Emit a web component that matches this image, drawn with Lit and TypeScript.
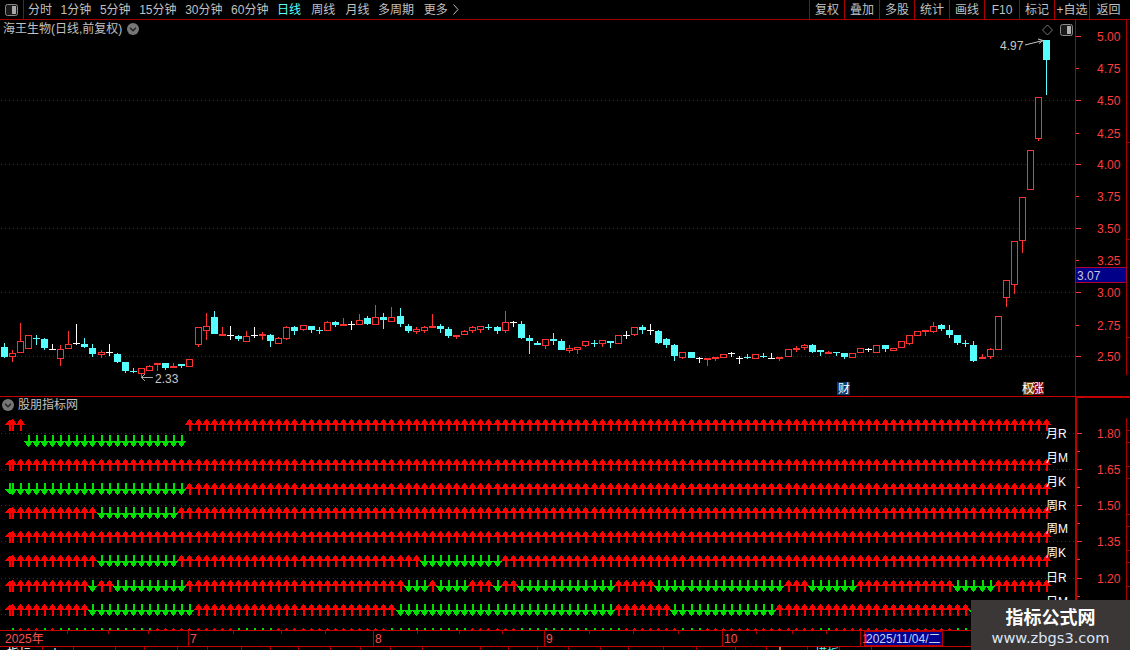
import { LitElement, html, css, svg } from "lit";
import { customElement } from "lit/decorators.js";

const RED = "#ff3232";
const DOT = "#a80000";
const CYAN = "#55ffff";
const WHITE = "#ffffff";

// kind: r hollow red, c filled cyan, d red doji bar, x cyan cross, w white cross
type C = [string, number, number, number, number];
const K: C[] = [
  ["c",343,347,357,358],["r",350,353,357,362],["r",323,341,353,353],["r",335,335,349,349],["x",335,338,339,345],
  ["c",338,339,348,350],["w",344,349,350,350],["r",345,349,359,366],["r",331,344,349,349],["w",324,343,344,345],
  ["c",338,344,347,348],["c",344,348,354,357],["r",350,352,355,358],["w",344,352,353,356],["c",353,354,362,363],
  ["c",362,362,371,373],["x",368,371,372,373],["r",368,368,374,378],["r",365,366,371,371],["d",363,363,365,371],
  ["c",363,363,368,370],["d",363,366,368,368],["c",364,364,366,368],["r",359,359,367,367],["r",327,327,345,347],
  ["r",313,326,331,340],["c",311,317,334,334],["d",327,334,336,336],["w",326,335,336,340],["c",335,336,339,341],
  ["r",331,336,342,342],["w",327,335,336,338],["d",332,334,336,340],["c",334,335,341,347],["r",337,338,344,344],
  ["r",326,327,339,340],["c",326,327,331,335],["r",325,325,330,331],["c",326,326,330,333],["x",327,330,331,334],
  ["r",321,322,331,331],["c",321,322,325,327],["d",318,324,326,326],["w",321,324,325,330],["r",314,320,325,325],
  ["c",316,318,324,325],["r",305,317,325,325],["c",313,317,320,329],["r",307,317,322,322],["c",308,316,324,327],
  ["c",324,326,331,333],["r",327,329,332,334],["r",326,327,331,333],["d",314,326,328,328],["c",324,326,329,333],
  ["c",327,329,336,338],["d",335,335,337,339],["r",330,331,335,335],["r",326,327,331,333],["r",326,326,330,333],
  ["x",324,327,328,330],["c",326,327,331,334],["r",311,322,331,333],["w",321,322,323,327],["c",321,324,338,339],
  ["c",335,338,341,354],["c",341,343,345,345],["r",339,339,346,349],["c",333,339,341,345],["c",339,341,350,350],
  ["r",345,348,351,353],["r",347,347,350,354],["r",341,341,346,347],["x",340,343,344,347],["r",340,340,344,347],
  ["c",341,341,343,348],["r",335,335,344,344],["w",331,335,336,339],["r",327,327,335,336],["c",325,327,330,334],
  ["w",324,330,331,335],["c",330,331,343,344],["c",338,339,345,348],["c",344,345,356,361],["r",352,352,358,359],
  ["c",352,352,358,358],["w",357,358,359,363],["d",358,358,360,366],["d",357,357,359,361],["r",354,354,358,358],
  ["w",352,353,354,357],["w",356,358,359,364],["x",354,357,358,359],["r",354,354,359,359],["x",353,356,357,358],
  ["w",353,358,359,359],["d",357,357,359,361],["r",349,349,357,357],["d",346,348,350,352],["r",344,345,348,350],
  ["c",344,345,352,353],["c",350,350,352,356],["d",351,352,354,354],["x",352,352,353,356],["c",353,353,357,359],
  ["r",353,353,358,358],["r",348,348,353,353],["w",348,349,350,352],["r",345,345,353,353],["c",345,345,349,352],
  ["r",348,348,351,351],["r",341,341,348,348],["r",335,335,344,345],["r",331,331,336,336],["d",330,330,332,336],
  ["r",322,326,332,333],["c",324,325,329,331],["c",325,330,335,338],["c",335,335,343,345],["x",340,343,344,347],
  ["c",341,345,361,362],["d",354,357,359,359],["r",348,349,357,359],["r",316,316,350,350],["r",280,280,298,307],
  ["r",241,241,285,294],["r",197,197,241,253],["r",150,150,190,190],["r",97,97,139,141],["c",40,40,60,95],
];

const cx = (i: number) => Math.floor(4.01 + 8.083 * i);

function candle(c: C, i: number) {
  const [k, wt, bt, bb, wb] = c;
  const m = cx(i);
  const l = m - 3;
  const col = k === "r" || k === "d" ? RED : k === "w" ? WHITE : CYAN;
  const wick = svg`<rect x=${m} y=${wt} width="1" height=${wb - wt} fill=${col}></rect>`;
  if (k === "r")
    return svg`${wick}<rect x=${l + 0.5} y=${bt + 0.5} width="6" height=${bb - bt - 1} fill="#000" stroke=${col}></rect>`;
  if (k === "x" || k === "w")
    return svg`${wick}<rect x=${l} y=${bt} width="7" height="1" fill=${col}></rect>`;
  return svg`${wick}<rect x=${l} y=${bt} width="7" height=${bb - bt} fill=${col}></rect>`;
}

function arrow(x: number, top: number, up: boolean) {
  const g = up ? "#ff0000" : "#00e000";
  return up
    ? svg`<path d="M${x} ${top}L${x + 5} ${top + 6}H${x + 1}V${top + 12}H${x - 1}V${top + 6}H${x - 5}Z" fill=${g}></path>`
    : svg`<path d="M${x - 1} ${top}H${x + 1}V${top + 6}H${x + 5}L${x} ${top + 12}L${x - 5} ${top + 6}H${x - 1}Z" fill=${g}></path>`;
}

// segments: [from, to, up?]
type Seg = [number, number, boolean];
const ROWS: { top: number; extra?: boolean; segs: Seg[] }[] = [
  { top: 419, extra: true, segs: [[1, 2, true], [23, 129, true]] },
  { top: 435, segs: [[3, 22, false]] },
  { top: 459, extra: true, segs: [[1, 129, true]] },
  { top: 483, extra: false, segs: [[1, 22, false], [23, 129, true]] },
  { top: 507, extra: true, segs: [[1, 11, true], [12, 21, false], [22, 129, true]] },
  { top: 531, extra: true, segs: [[1, 129, true]] },
  { top: 555, extra: true, segs: [[1, 11, true], [12, 21, false], [22, 51, true], [52, 61, false], [62, 129, true]] },
  { top: 580, extra: true, segs: [[1, 10, true], [11, 11, false], [12, 13, true], [14, 22, false], [23, 49, true], [50, 52, false], [53, 53, true], [54, 57, false], [58, 60, true], [61, 61, false], [62, 63, true], [64, 75, false], [76, 80, true], [81, 96, false], [97, 99, true], [100, 105, false], [106, 117, true], [118, 122, false], [123, 129, true]] },
  { top: 604, extra: true, segs: [[1, 10, true], [11, 23, false], [24, 48, true], [49, 75, false], [76, 82, true], [83, 95, false], [96, 119, true], [120, 120, false], [121, 129, true]] },
  { top: 628, segs: [[1, 1, false], [2, 4, true], [5, 5, false], [6, 6, true], [7, 18, false], [19, 28, true], [29, 33, false], [34, 47, true], [48, 57, false], [58, 63, true], [64, 76, false], [77, 83, true], [84, 86, false], [87, 100, true], [101, 102, false], [103, 117, true], [118, 119, false], [120, 129, true]] },
];

const arrows = () =>
  ROWS.map((r) => {
    const out: unknown[] = [];
    for (const [a, b, up] of r.segs)
      for (let i = a; i <= b; i++) out.push(arrow(cx(i) + 0.5, r.top, up));
    if (r.extra !== undefined) out.push(arrow(10, r.top, r.segs[0][2]));
    return out;
  });

const LABELS: [string, number][] = [
  ["月R", 438], ["月M", 462], ["月K", 486], ["周R", 510], ["周M", 533], ["周K", 557], ["日R", 582], ["日M", 606],
];
const UPPER: [string, number][] = [
  ["5.00", 36], ["4.75", 68], ["4.50", 100], ["4.25", 133], ["4.00", 164], ["3.75", 196], ["3.50", 228],
  ["3.25", 260], ["3.00", 292], ["2.75", 325], ["2.50", 356],
];
const LOWER: [string, number][] = [["1.80", 433], ["1.65", 469], ["1.50", 505], ["1.35", 541], ["1.20", 578]];
const TABS = ["分时", "1分钟", "5分钟", "15分钟", "30分钟", "60分钟", "日线", "周线", "月线", "多周期"];
const BTNS = ["复权", "叠加", "多股", "统计", "画线", "F10", "标记", "+自选", "返回"];
const MONTHS: [string, number][] = [["7", 188], ["8", 373], ["9", 544], ["10", 722], ["1", 860]];
const TTICKS = [67, 108, 148, 233, 281, 325, 417, 459, 502, 589, 633, 678, 756, 792, 826];
const STOPS = [42, 73, 115, 144, 177, 207, 241, 270, 298, 330, 360, 390, 422, 480, 508, 537, 568, 600, 628, 663, 696, 735, 766, 807, 839, 871, 971];
const STAT: Record<number, [string, string?]> = {
  0: ["指标"], 1: ["卜"], 23: ["大"], 24: ["模板", "cy"],
};

const split = (c: string) => svg`<svg class="ico" viewBox="0 0 13 12" width="13" height="12">
  <rect x="0.5" y="0.5" width="12" height="11" rx="2" fill="#1a1a1a" stroke="#8a8a8a"></rect>
  <rect x="7" y="2" width="4" height="8" fill=${c}></rect></svg>`;
const chev = () => html`<svg class="chev" viewBox="0 0 12 12" width="12" height="12">
  <circle cx="6" cy="6" r="6" fill="#777"></circle>
  <path d="M3 4.8L6 7.8L9 4.8" fill="none" stroke="#222" stroke-width="1.4"></path></svg>`;

@customElement("app-root")
export class AppRoot extends LitElement {
  static styles = css`
    :host { display: block; position: relative; width: 1130px; height: 650px; overflow: hidden; background: #000;
      font: 12px "Liberation Sans", "Noto Sans CJK SC", sans-serif; color: #c0c0c0; }
    svg { display: block; }
    svg text { font: 12px "Liberation Sans", "Noto Sans CJK SC", sans-serif; }
    .toolbar { display: flex; height: 19px; border-bottom: 1px solid #a80000; line-height: 21px; }
    .tool-icon { width: 23px; border-right: 1px solid #a80000; display: flex; align-items: center; justify-content: center; }
    .tabs { display: flex; gap: 8.6px; padding-left: 4px; flex: 1; white-space: nowrap; }
    .tabs .on { color: #55ffff; }
    .tabs .wide { margin-left: 1.6px; }
    .tabs .more { display: flex; align-items: flex-start; gap: 5px; margin-left: 1px; height: 19px; }
    .tabs .more svg { margin-top: 4px; }
    .btns { display: flex; }
    .btn { width: 34px; border-left: 1px solid #a80000; text-align: center; white-space: nowrap; }
    .btn.last { width: 37px; padding-right: 3px; }
    .pane { display: flex; position: relative; }
    .upper { height: 376px; border-bottom: 1px solid #c80000; }
    .lower { height: 233px; border-bottom: 1px solid #c80000; }
    .legend { position: absolute; display: flex; align-items: center; gap: 4px; line-height: 14px; white-space: nowrap; }
    .legend.top { left: 3px; top: 2px; gap: 5px; }
    .legend.bot { left: 2px; top: 1px; }
    .top-ico { position: absolute; left: 1060px; top: 4px; }
    .time { height: 15px; border-bottom: 1px solid #c80000; }
    .status { display: flex; height: 3px; overflow: hidden; line-height: 12px; }
    .cell { box-sizing: border-box; border-right: 1px solid #a80000; padding-top: 1px; padding-left: 7px; height: 20px; white-space: nowrap; color: #fff; flex: none; }
    .cell.cy { color: #55ffff; }
    .mark { position: absolute; right: 0; bottom: 0; width: 159px; height: 50px; background: #3b3737; display: flex; flex-direction: column; align-items: center; }
    .mark b { font: 700 18px/22px "Noto Sans CJK SC", sans-serif; color: #fff; margin-top: 5px; }
    .mark span { font: 14.6px/19px "DejaVu Sans", sans-serif; color: #dbe6f6; margin-top: 1px; }
  `;

  render() {
    let px = 0;
    return html`
      <div class="toolbar">
        <div class="tool-icon">${split("#a8a8a8")}</div>
        <div class="tabs">
          ${TABS.map((t, i) => html`<span class="${i === 6 ? "on" : ""} ${i === 7 || i === 8 ? "wide" : ""}">${t}</span>`)}
          <span class="more">更多<svg width="6" height="11" viewBox="0 0 6 11"><path d="M0.5 0.5L5 5.5L0.5 10.5" fill="none" stroke="#c0c0c0"></path></svg></span>
        </div>
        <div class="btns">${BTNS.map((b, i) => html`<div class="btn ${i === 8 ? "last" : ""}">${b}</div>`)}</div>
      </div>

      <div class="pane upper">
        <svg width="1075" height="376" viewBox="0 20 1075 376">
          ${[100, 164, 228, 292, 356].map(
            (y) => svg`<line x1="1" x2="1075" y1=${y + 0.5} y2=${y + 0.5} stroke=${DOT} stroke-dasharray="1 3"></line>`
          )}
          <g shape-rendering="crispEdges">${K.map((c, i) => candle(c, i))}</g>
          <polygon points="1047.5,25 1052.5,30 1047.5,35 1042.5,30" fill="none" stroke="#777"></polygon>
          <text x="1000" y="50" fill="#c8c8c8">4.97</text>
          <path d="M1025 45L1043 40.5M1038 39L1043 40.5L1039 43.5" fill="none" stroke="#c8c8c8"></path>
          <path d="M141 377.5H153M145 374L141.5 377.5L145 381" fill="none" stroke="#a8a8a8"></path>
          <text x="155" y="383" fill="#c8c8c8">2.33</text>
          <rect x="837" y="382" width="13" height="13" fill="#0a3a6e"></rect>
          <text x="838" y="393" fill="#fff">财</text>
          <rect x="1023" y="382" width="10" height="13" fill="#7a4a00"></rect>
          <rect x="1033" y="382" width="11" height="13" fill="#7a0000"></rect>
          <text x="1022" y="393" fill="#fff">权</text>
          <text x="1032" y="393" fill="#fff">涨</text>
        </svg>
        <svg width="55" height="376" viewBox="1075 20 55 376" shape-rendering="crispEdges">
          <rect x="1075" y="20" width="1" height="376" fill="#b00000"></rect>
          <rect x="1126" y="20" width="1" height="355" fill="#a80000"></rect>
          ${[142, 239, 337].map((y) => svg`<rect x="1127" y=${y} width="3" height="1" fill="#a80000"></rect>`)}
          ${UPPER.map(
            ([t, y], i) => svg`<rect x="1076" y=${y} width=${i % 2 ? 3 : 5} height="1" fill=${RED}></rect>
              <text x="1097" y=${y + 5} fill="#ff3c3c" shape-rendering="auto">${t}</text>`
          )}
          <rect x="1075.5" y="267.5" width="51" height="15" fill="#000088" stroke="#b00030"></rect>
          <text x="1077" y="279.5" fill="#c8c8d8">3.07</text>
        </svg>
        <div class="legend top"><span>海王生物(日线,前复权)</span>${chev()}</div>
        <div class="top-ico">${split("#b0b0b0")}</div>
      </div>

      <div class="pane lower">
        <svg width="1075" height="233" viewBox="0 397 1075 233">
          ${[433, 469, 505, 541, 578, 614].map(
            (y) => svg`<line x1="1" x2="1075" y1=${y + 0.5} y2=${y + 0.5} stroke=${DOT} stroke-dasharray="1 3"></line>`
          )}
          <g shape-rendering="crispEdges">${arrows()}</g>
          ${LABELS.map(([t, y]) => svg`<text x="1046" y=${y} fill="#fff">${t}</text>`)}
        </svg>
        <svg width="55" height="233" viewBox="1075 397 55 233">
          <g shape-rendering="crispEdges">
            <rect x="1075" y="397" width="2" height="233" fill="#c00000"></rect>
            <rect x="1075" y="397" width="55" height="1" fill="#c00000"></rect>
            <rect x="1126" y="418" width="1" height="212" fill="#a80000"></rect>
            ${[430, 442, 466, 478, 514, 526, 550, 562, 586, 610].map(
              (y) => svg`<rect x="1127" y=${y} width="3" height="1" fill="#a80000"></rect>`
            )}
            ${LOWER.map(([, y]) => svg`<rect x="1077" y=${y} width="5" height="1" fill=${RED}></rect>`)}
            ${[451, 487, 523, 559, 596].map((y) => svg`<rect x="1077" y=${y} width="3" height="1" fill=${RED}></rect>`)}
          </g>
          ${LOWER.map(([t, y]) => svg`<text x="1097" y=${y + 5} fill="#ff3c3c">${t}</text>`)}
        </svg>
        <div class="legend bot">${chev()}<span>股朋指标网</span></div>
      </div>

      <div class="time">
        <svg width="1130" height="15" viewBox="0 631 1130 15">
          <g shape-rendering="crispEdges">
            ${TTICKS.map((x) => svg`<rect x=${x} y="631" width="1" height="3" fill="#a80000"></rect>`)}
            ${MONTHS.map(([, x]) => svg`<rect x=${x} y="631" width="1" height="15" fill="#b00000"></rect>`)}
            <rect x="864.5" y="631.5" width="78" height="14" fill="#000090" stroke="#b00000"></rect>
          </g>
          <text x="5" y="643" fill="#ff4d4d">2025年</text>
          ${MONTHS.map(([t, x]) => svg`<text x=${x + 2} y="643" fill="#ff4d4d">${t}</text>`)}
          <text x="866" y="643" fill="#c8d0f0">2025/11/04/二</text>
        </svg>
      </div>

      <div class="status">
        ${STOPS.map((s, i) => {
          const w = s + 1 - px;
          px = s + 1;
          const st = STAT[i];
          return html`<div class="cell ${st && st[1] ? st[1] : ""}" style="width:${w}px">${st ? st[0] : ""}</div>`;
        })}
      </div>

      <div class="mark"><b>指标公式网</b><span>www.zbgs3.com</span></div>
    `;
  }
}
